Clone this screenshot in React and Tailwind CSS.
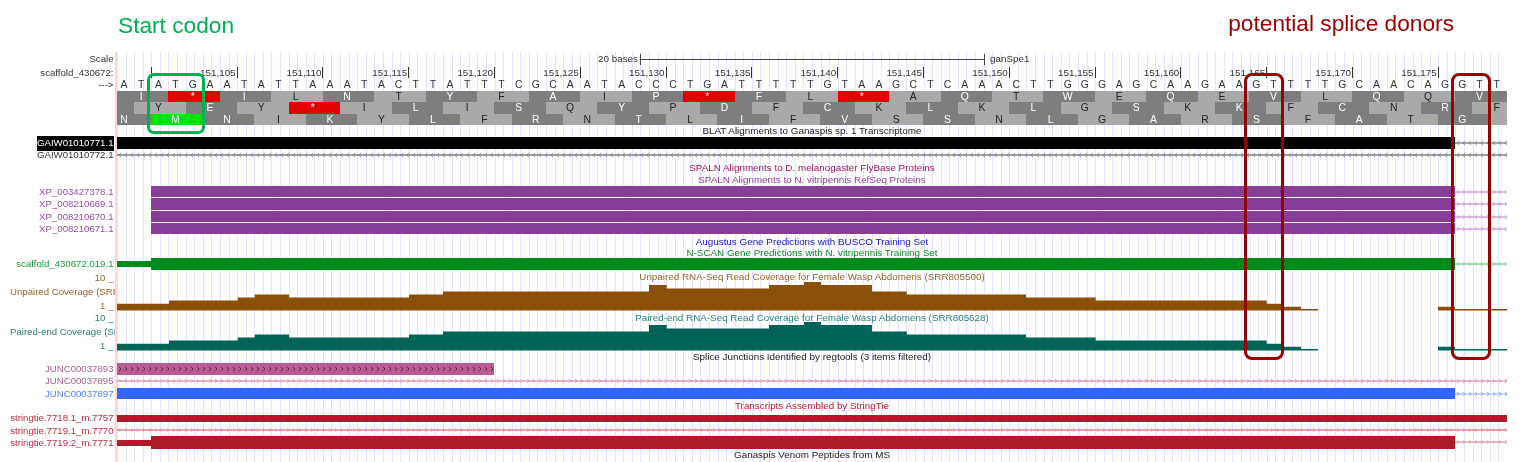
import React, { useId } from 'react';

const GRID = 'bg-[repeating-linear-gradient(90deg,#e4e4ff_0,#e4e4ff_1px,transparent_1px,transparent_8.58px)]';

const BASES = 'ATATGAATATTAAATACTTATTTCGCAATACCCTGATTTTTGTAAGCTCAAACTTGGGAGCAAGAAGTTTTGCAACAGGTT'.split('');
const TICKS = ['151,105', '151,110', '151,115', '151,120', '151,125', '151,130', '151,135', '151,140', '151,145', '151,150', '151,155', '151,160', '151,165', '151,170', '151,175'];

// first codon of frames 2 and 3 hangs off the left edge of the track
const FRAME1 = 'I*ILNTYFAIP*FL*AQTWEQEVLQQV'.split('');
const FRAME2 = ' YEY*ILISQYPDFCKLKLGSKKFCNRF'.split('');
const FRAME3 = 'NMNIKYLFRNTLIFVSSNLGARSFATG '.split('');

const COVERAGE = [
  [0, 52, 32.8], [52, 120.7, 29.5], [120.7, 137.7, 26.5], [137.7, 172, 23.5], [172, 292, 26.5],
  [292, 326, 23.5], [326, 532, 20.5], [532, 549.7, 14], [549.7, 652, 17.5], [652, 687, 14],
  [687, 704, 11], [704, 755, 14], [755, 789.7, 20.5], [789.7, 909, 23.5], [909, 978.7, 26.5],
  [978.7, 1149.7, 29.5], [1149.7, 1167, 32.8], [1167, 1184, 35.8], [1184, 1201, 38],
  [1321, 1338, 35.8], [1338, 1390, 38],
];

// one path so neighbouring steps leave no seams
const COVERAGE_PATH = COVERAGE.map(([a, b, top]) => `M${a} ${top}H${b}V39.5H${a}Z`).join('');

const Row = ({ label, labelClass = 'text-[#333]', h = 'h-[12.35px]', children, trackClass = '' }) => (
  <div className={`flex ${h}`}>
    <div className={`w-[117px] shrink-0 border-r-2 border-[#fcd6d6] pr-[1.5px] pt-[1px] text-[9.65px] flex items-center justify-end whitespace-nowrap ${labelClass}`}>
      {label}
    </div>
    <div className={`w-[1390px] relative overflow-hidden flex items-center ${GRID} ${trackClass}`}>
      {children}
    </div>
  </div>
);

const Title = ({ h, color, children }) => (
  <Row h={h}>
    <span className={`w-full pt-[1px] text-center whitespace-nowrap ${color}`}>{children}</span>
  </Row>
);

const Arrows = ({ line, arrow, dir = 'right', className = 'flex-1' }) => {
  const id = useId();
  return (
    <svg className={`h-full ${className}`} height="12" preserveAspectRatio="none">
      <defs>
        <pattern id={id} width="6" height="12" patternUnits="userSpaceOnUse">
          <path d={dir === 'right' ? 'M2 3.8 L4 6 L2 8.2' : 'M4 3.8 L2 6 L4 8.2'} fill="none" stroke={arrow} strokeWidth="0.8" />
        </pattern>
      </defs>
      <rect x="0" y="5.5" width="100%" height="1" fill={line} />
      <rect x="0" y="0" width="100%" height="12" fill={`url(#${id})`} />
    </svg>
  );
};

const Codons = ({ letters, offset }) => (
  <div className={`flex h-[11.6px] text-[10.4px] ${offset}`}>
    {letters.map((c, i) => {
      const even = i % 2 === 0;
      let tone = even ? 'bg-[#7e7e7e] text-white' : 'bg-[#a9a9a9] text-[#222]';
      if (c === '*') tone = 'bg-[#e30000] text-white';
      if (c === 'M') tone = 'bg-[#00e600] text-white';
      return (
        <div key={i} className={`w-[51.48px] shrink-0 pr-[3px] flex items-center justify-center ${tone}`}>
          {c}
        </div>
      );
    })}
  </div>
);

const Coverage = ({ fill, labelClass, label, title, titleClass }) => (
  <div className="flex h-[40px]">
    <div className={`w-[117px] shrink-0 border-r-2 border-[#fcd6d6] overflow-hidden whitespace-nowrap text-[9.65px] ${labelClass}`}>
      <div className="-mt-[0.5px] pr-[1.5px] text-right leading-[14px]">10 _</div>
      <div className="leading-[14px] pl-[10px]">{label}</div>
      <div className="pr-[1.5px] text-right leading-[14px]">1 _</div>
    </div>
    <div className={`w-[1390px] relative ${GRID}`}>
      <svg className="w-full h-full" viewBox="0 0 1390 40">
        <path d={COVERAGE_PATH} fill={fill} />
      </svg>
      <div className={`absolute inset-x-0 text-center leading-[12px] ${titleClass}`}>{title}</div>
    </div>
  </div>
);

export default function App() {
  return (
    <div className="w-[1539px] h-[462px] relative overflow-hidden bg-white text-[9.85px] blur-[0.35px] font-['Liberation_Sans',Arial,sans-serif] text-[#333]">
      <header className="h-[52px] flex justify-between pl-[118px] pr-[85px] text-[22.7px] leading-none">
        <div className="pt-[14px] text-[#00b050]">Start codon</div>
        <div className="pt-[12px] text-[#990000]">potential splice donors</div>
      </header>

      <Row label="Scale" h="h-[14px]">
        <div className="flex items-center pl-[481px] h-full">
          <span className="w-[42px] whitespace-nowrap">20 bases</span>
          <div className="w-[345px] h-[11px] border-x border-[#444] flex items-center"><div className="w-full h-px bg-[#444]" /></div>
          <span className="ml-[5px]">ganSpe1</span>
        </div>
      </Row>
      <Row label="scaffold_430672:" h="h-[13px]">
        <div className="flex h-full items-stretch">
          <div className="w-[34.8px] shrink-0 border-r border-[#333] my-[1px]" />
          {TICKS.map((t) => (
            <div key={t} className="w-[85.8px] shrink-0 border-r border-[#333] my-[1px] pr-[1px] text-right leading-[12px]">{t}</div>
          ))}
        </div>
      </Row>
      <Row label="--->" h="h-[11.7px]">
        <div className="flex">
          {BASES.map((b, i) => (
            <div key={i} className="w-[17.16px] shrink-0 pr-[3px] text-center text-[10.4px]">{b}</div>
          ))}
        </div>
      </Row>

      <Row h="h-[11.6px]"><Codons letters={FRAME1} offset="" /></Row>
      <Row h="h-[11.6px]"><Codons letters={FRAME2} offset="-ml-[34.32px]" /></Row>
      <Row h="h-[11.6px]"><Codons letters={FRAME3} offset="-ml-[17.16px]" /></Row>

      <Title h="h-[11.8px]" color="text-[#222]">BLAT Alignments to Ganaspis sp. 1 Transcriptome</Title>
      <Row label={<span className="bg-black text-white">GAIW01010771.1</span>} h="h-[11.7px]">
        <div className="w-[1338px] h-full bg-black" />
        <Arrows line="#555" arrow="#777" dir="left" />
      </Row>
      <Row label="GAIW01010772.1" h="h-[12.5px]">
        <Arrows line="#444" arrow="#777" dir="left" />
      </Row>

      <Title h="h-[13px]" color="text-[#a5125f]">SPALN Alignments to D. melanogaster FlyBase Proteins</Title>
      <Title h="h-[11px]" color="text-[#8d3f9c]">SPALN Alignments to N. vitripennis RefSeq Proteins</Title>
      {['XP_003427378.1', 'XP_008210669.1', 'XP_008210670.1', 'XP_008210671.1'].map((name) => (
        <Row key={name} label={name} labelClass="text-[#9350a8]" trackClass="py-[0.4px]">
          <div className="w-[34.3px] shrink-0" />
          <div className="w-[1304px] h-full bg-[#873e98]" />
          <Arrows line="#b57cc4" arrow="#c79ad2" />
        </Row>
      ))}

      <Title h="h-[13.3px]" color="text-[#1313d8]">Augustus Gene Predictions with BUSCO Training Set</Title>
      <Title h="h-[10px]" color="text-[#0b8a2b]">N-SCAN Gene Predictions with N. vitripennis Training Set</Title>
      <Row label="scaffold_430672.019.1" labelClass="text-[#1d9a3c]" h="h-[11.7px]">
        <div className="w-[34.3px] h-[6px] bg-[#008c1c]" />
        <div className="w-[1304px] h-full bg-[#008c1c]" />
        <Arrows line="#4fbd62" arrow="#7ed08c" />
      </Row>
      <div className="h-[1.5px] ml-[117px] w-[1390px]" />

      <Coverage
        fill="#8a5008"
        labelClass="text-[#96672e]"
        label="Unpaired Coverage (SRR805500)"
        title="Unpaired RNA-Seq Read Coverage for Female Wasp Abdomens (SRR805500)"
        titleClass="top-0 text-[#96672e]"
      />
      <Coverage
        fill="#006358"
        labelClass="text-[#2a7f76]"
        label="Paired-end Coverage (SRR805628)"
        title="Paired-end RNA-Seq Read Coverage for Female Wasp Abdomens (SRR805628)"
        titleClass="top-[1px] text-[#2a7f76]"
      />

      <Title h="h-[12px]" color="text-[#222]">Splice Junctions Identified by regtools (3 items filtered)</Title>
      <Row label="JUNC00037893" labelClass="text-[#a9628f]" h="h-[11.6px]">
        <div className="w-[377px] h-full bg-[#bb5b96] flex items-center">
          <Arrows line="transparent" arrow="#3d1730" className="w-full" />
        </div>
      </Row>
      <Row label="JUNC00037895" labelClass="text-[#a9628f]" h="h-[12.4px]">
        <Arrows line="#c9709f" arrow="#d893b8" />
      </Row>
      <Row label="JUNC00037897" labelClass="text-[#5a80ff]" h="h-[12.5px]" trackClass="py-[0.6px]">
        <div className="w-[1338px] h-full bg-[#3366ff]" />
        <Arrows line="#8facff" arrow="#6a90ff" />
      </Row>

      <Title h="h-[12.3px]" color="text-[#b01c2e]">Transcripts Assembled by StringTie</Title>
      <Row label="stringtie.7718.1_m.7757" labelClass="text-[#b8303f]" h="h-[12.2px]">
        <div className="w-full h-[7px] bg-[#ad1a2a]" />
      </Row>
      <Row label="stringtie.7719.1_m.7770" labelClass="text-[#b8303f]" h="h-[12.2px]">
        <Arrows line="#c9475a" arrow="#e39aa5" />
      </Row>
      <Row label="stringtie.7719.2_m.7771" labelClass="text-[#b8303f]" h="h-[12.3px]">
        <div className="w-[34.3px] h-[6px] bg-[#ad1a2a]" />
        <div className="w-[1304px] h-full bg-[#ad1a2a]" />
        <Arrows line="#d0798a" arrow="#e39aa5" />
      </Row>
      <Title h="h-[13px]" color="text-[#222]">Ganaspis Venom Peptides from MS</Title>

      {/* hand-drawn highlight boxes lying over the tracks */}
      <div className="absolute left-[147px] top-[73px] w-[58px] h-[61px] rounded-[7px] border-[3px] border-[#00b050]" />
      <div className="absolute left-[1244px] top-[73px] w-[39.5px] h-[287px] rounded-[8px] border-[3px] border-[#990000]" />
      <div className="absolute left-[1451px] top-[73px] w-[39.5px] h-[287px] rounded-[8px] border-[3px] border-[#990000]" />
    </div>
  );
}
